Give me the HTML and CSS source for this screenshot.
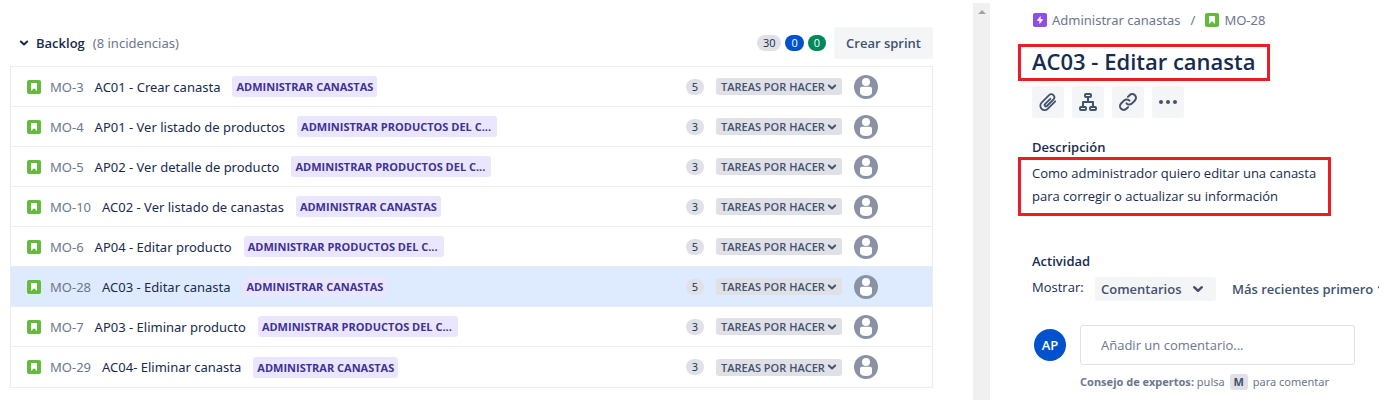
FILE: index.html
```
<!DOCTYPE html>
<html lang="es">
<head>
<meta charset="utf-8">
<title>Backlog</title>
<link rel="stylesheet" href="styles.css">
</head>
<body>
<svg class="sprite" aria-hidden="true">
  <symbol id="story" viewBox="0 0 14 14"><rect width="14" height="14" rx="2" fill="#63ba3c"/><path d="M4 3.600C4 3.200 4.300 3 4.600 3h4.800c.3 0 .6.2.6.6V11L7 8.300 4 11z" fill="#fff"/></symbol>
  <symbol id="epic" viewBox="0 0 14 14"><rect width="14" height="14" rx="2" fill="#904ee2"/><path d="M7.600 2.700v3.500h2.700L6.400 11.300V7.800H3.700z" fill="#fff"/></symbol>
  <symbol id="chevron" viewBox="0 0 10 10"><path d="M1.800 3.500 5 6.500l3.200-3" fill="none" stroke="currentColor" stroke-width="2" stroke-linecap="round" stroke-linejoin="round"/></symbol>
  <symbol id="person" viewBox="0 0 24 24"><circle cx="12" cy="12" r="12" fill="#8993a4"/><circle cx="12" cy="7" r="4" fill="#fff"/><path d="M6 14c0-1.400.8-2.200 2-2.200h8c1.200 0 2 .8 2 2.200v3.500c0 2.300-2.400 3.500-6 3.500s-6-1.200-6-3.500z" fill="#fff"/></symbol>
</svg>
<div class="page">
  <main class="backlog">
    <header class="backlog-head">
      <svg class="icon-10 dark"><use href="#chevron"/></svg>
      <h2 class="backlog-title">Backlog</h2>
      <span class="backlog-count">(8 incidencias)</span>
      <span class="pill push">30</span>
      <span class="pill pill-blue">0</span>
      <span class="pill pill-green">0</span>
      <button class="button sprint">Crear sprint</button>
    </header>
    <ul class="issues">
      <li class="issue"><svg class="icon-14"><use href="#story"/></svg><a class="key" href="#">MO-3</a><span class="summary">AC01 - Crear canasta</span><span class="epic">ADMINISTRAR CANASTAS</span><span class="pill push">5</span><label class="status"><select class="status-select" aria-label="Estado"><option>TAREAS POR HACER</option></select><svg class="icon-10"><use href="#chevron"/></svg></label><svg class="avatar"><use href="#person"/></svg></li>
      <li class="issue"><svg class="icon-14"><use href="#story"/></svg><a class="key" href="#">MO-4</a><span class="summary">AP01 - Ver listado de productos</span><span class="epic epic-long">ADMINISTRAR PRODUCTOS DEL C...</span><span class="pill push">3</span><label class="status"><select class="status-select" aria-label="Estado"><option>TAREAS POR HACER</option></select><svg class="icon-10"><use href="#chevron"/></svg></label><svg class="avatar"><use href="#person"/></svg></li>
      <li class="issue"><svg class="icon-14"><use href="#story"/></svg><a class="key" href="#">MO-5</a><span class="summary">AP02 - Ver detalle de producto</span><span class="epic epic-long">ADMINISTRAR PRODUCTOS DEL C...</span><span class="pill push">3</span><label class="status"><select class="status-select" aria-label="Estado"><option>TAREAS POR HACER</option></select><svg class="icon-10"><use href="#chevron"/></svg></label><svg class="avatar"><use href="#person"/></svg></li>
      <li class="issue"><svg class="icon-14"><use href="#story"/></svg><a class="key" href="#">MO-10</a><span class="summary">AC02 - Ver listado de canastas</span><span class="epic">ADMINISTRAR CANASTAS</span><span class="pill push">3</span><label class="status"><select class="status-select" aria-label="Estado"><option>TAREAS POR HACER</option></select><svg class="icon-10"><use href="#chevron"/></svg></label><svg class="avatar"><use href="#person"/></svg></li>
      <li class="issue"><svg class="icon-14"><use href="#story"/></svg><a class="key" href="#">MO-6</a><span class="summary">AP04 - Editar producto</span><span class="epic epic-long">ADMINISTRAR PRODUCTOS DEL C...</span><span class="pill push">5</span><label class="status"><select class="status-select" aria-label="Estado"><option>TAREAS POR HACER</option></select><svg class="icon-10"><use href="#chevron"/></svg></label><svg class="avatar"><use href="#person"/></svg></li>
      <li class="issue selected"><svg class="icon-14"><use href="#story"/></svg><a class="key" href="#">MO-28</a><span class="summary">AC03 - Editar canasta</span><span class="epic">ADMINISTRAR CANASTAS</span><span class="pill push">5</span><label class="status"><select class="status-select" aria-label="Estado"><option>TAREAS POR HACER</option></select><svg class="icon-10"><use href="#chevron"/></svg></label><svg class="avatar"><use href="#person"/></svg></li>
      <li class="issue"><svg class="icon-14"><use href="#story"/></svg><a class="key" href="#">MO-7</a><span class="summary">AP03 - Eliminar producto</span><span class="epic epic-long">ADMINISTRAR PRODUCTOS DEL C...</span><span class="pill push">3</span><label class="status"><select class="status-select" aria-label="Estado"><option>TAREAS POR HACER</option></select><svg class="icon-10"><use href="#chevron"/></svg></label><svg class="avatar"><use href="#person"/></svg></li>
      <li class="issue"><svg class="icon-14"><use href="#story"/></svg><a class="key" href="#">MO-29</a><span class="summary">AC04- Eliminar canasta</span><span class="epic">ADMINISTRAR CANASTAS</span><span class="pill push">3</span><label class="status"><select class="status-select" aria-label="Estado"><option>TAREAS POR HACER</option></select><svg class="icon-10"><use href="#chevron"/></svg></label><svg class="avatar"><use href="#person"/></svg></li>
    </ul>
  </main>
  <div class="scrollbar"><svg class="scroll-arrow" viewBox="0 0 8 4"><path d="M0 4 4 0l4 4z" fill="#a3a3a3"/></svg></div>
  <aside class="detail">
    <nav class="crumbs">
      <svg class="icon-14"><use href="#epic"/></svg><a class="crumb" href="#">Administrar canastas</a><span class="slash">/</span><svg class="icon-14"><use href="#story"/></svg><a class="crumb" href="#">MO-28</a>
    </nav>
    <h1 class="title marked">AC03 - Editar canasta</h1>
    <div class="tools">
      <button class="button tool" aria-label="Adjuntar"><svg class="icon-20" viewBox="0 0 20 20"><path d="M12.300 6.800 7 12.100a1.300 1.300 0 0 0 1.900 1.900l6.500-6.500a3 3 0 0 0-4.300-4.300L3.600 10.700a4.300 4.300 0 0 0 6.100 6.100l7.500-7.500" fill="none" stroke="currentColor" stroke-width="1.800" stroke-linecap="round" stroke-linejoin="round"/></svg></button>
      <button class="button tool" aria-label="Añadir subtarea"><svg class="icon-20" viewBox="0 0 20 20"><g fill="none" stroke="currentColor" stroke-width="2" stroke-linejoin="round"><rect x="7" y="2" width="6" height="3" rx="1"/><rect x="2" y="15" width="6" height="3" rx="1"/><rect x="12" y="15" width="6" height="3" rx="1"/><path d="M10 5v5M5 15v-5h10v5"/></g></svg></button>
      <button class="button tool" aria-label="Enlazar"><svg class="icon-20" viewBox="0 0 20 20"><g fill="none" stroke="currentColor" stroke-width="2" stroke-linecap="round"><path d="M8.500 11.300a3.700 3.700 0 0 0 5.300.3l3.100-3.100a3.700 3.700 0 0 0-5.300-5.300L9.900 4.900"/><path d="M11.500 8.700a3.700 3.700 0 0 0-5.300-.3l-3.100 3.100a3.700 3.700 0 0 0 5.300 5.300l1.700-1.700"/></g></svg></button>
      <button class="button tool" aria-label="Más acciones"><svg class="icon-20" viewBox="0 0 20 20"><g fill="currentColor"><circle cx="3" cy="10" r="2"/><circle cx="10" cy="10" r="2"/><circle cx="17" cy="10" r="2"/></g></svg></button>
    </div>
    <h2 class="section">Descripción</h2>
    <p class="description marked">Como administrador quiero editar una canasta<br>para corregir o actualizar su información</p>
    <h2 class="section">Actividad</h2>
    <div class="filter">
      <label class="filter-label" for="show">Mostrar:</label>
      <span class="filter-box"><select class="filter-select" id="show"><option>Comentarios</option></select><svg class="icon-12"><use href="#chevron"/></svg></span>
      <button class="order">Más recientes primero<svg class="icon-12"><use href="#chevron"/></svg></button>
    </div>
    <div class="comment">
      <span class="initials">AP</span>
      <div class="comment-body">
        <input class="comment-input" type="text" placeholder="Añadir un comentario..." aria-label="Añadir un comentario">
        <p class="tip"><b>Consejo de expertos:</b> pulsa <kbd class="keycap">M</kbd> para comentar</p>
      </div>
    </div>
  </aside>
</div>
</body>
</html>
```
FILE: styles.css
```
* { box-sizing: border-box; }
body { margin: 0; background: #fff; color: #172b4d; font: 13px/20px "Open Sans", "Noto Sans", sans-serif; overflow: hidden; }
h1, h2, p, ul { margin: 0; padding: 0; font-size: inherit; }
button, input, select { margin: 0; border: 0; font: inherit; color: inherit; }
a { color: inherit; text-decoration: none; }
svg { display: block; flex: none; }
.sprite { position: absolute; width: 0; height: 0; }
.icon-10 { width: 10px; height: 10px; }
.icon-12 { width: 12px; height: 12px; }
.icon-14 { width: 14px; height: 14px; }
.icon-20 { width: 20px; height: 20px; }
.dark { color: #172b4d; }
.page { display: flex; min-height: 100vh; }

.backlog { flex: 1; min-width: 0; padding: 27px 40px 0 10px; }
.backlog-head { display: flex; align-items: center; height: 32px; padding-left: 9px; }
.backlog-title { margin-left: 7px; font-weight: 600; }
.backlog-count { margin-left: 8px; color: #6b778c; font-family: "Noto Sans", sans-serif; }
.pill { flex: none; min-width: 18px; padding: 0 6px; border-radius: 8px; background: #dfe1e6; font-size: 11px; line-height: 16px; text-align: center; }
.pill + .pill { margin-left: 4px; }
.push.push { margin-left: auto; }
.pill-blue { background: #0052cc; color: #fff; }
.pill-green { background: #00875a; color: #fff; }
.button { border-radius: 3px; background: #f4f5f7; color: #42526e; }
.sprint { height: 32px; margin-left: 8px; padding: 0 12px; font-weight: 600; }

.issues { margin-top: 7px; border: 1px solid #ebecf0; list-style: none; }
.issue { display: flex; align-items: center; height: 40px; padding: 0 54px 0 16px; border-bottom: 1px solid #ebecf0; }
.issue:last-child { border-bottom: 0; }
.selected { background: #deebff; }
.key { margin-left: 9px; color: #6b778c; font-family: "Noto Sans", sans-serif; }
.summary { margin-left: 11px; font-family: "Noto Sans", sans-serif; white-space: nowrap; }
.epic { margin-left: 12px; padding: 0 4px; border-radius: 3px; background: #eae6ff; color: #403294; font-size: 11px; font-weight: 700; line-height: 21px; white-space: nowrap; }
.epic-long { min-width: 200px; }
.status { display: grid; align-items: center; flex: none; width: 126px; margin: 0 12px; color: #42526e; }
.status-select { grid-area: 1 / 1; height: 17px; padding: 0 5px; appearance: none; border-radius: 3px; background: #dfe1e6; font-size: 11px; font-weight: 600; line-height: 17px; }
.status .icon-10 { grid-area: 1 / 1; justify-self: end; margin-right: 5px; }
.avatar { width: 24px; height: 24px; }

.scrollbar { flex: none; width: 17px; margin-top: 3px; padding-top: 7px; background: #f0f0f0; }
.scroll-arrow { width: 8px; height: 4px; margin: 0 auto; }

.detail { flex: none; width: 402px; padding: 10px 13px 0 28px; overflow: hidden; }
.crumbs { display: flex; align-items: center; padding-left: 15px; color: #6b778c; font-family: "Noto Sans", sans-serif; }
.crumb { margin-left: 5px; }
.slash { margin: 0 10px; }
.marked { width: fit-content; border: 3px solid #ed1c24; }
.title { margin-top: 14px; padding: 0 11px 2px; font-size: 22px; font-weight: 600; line-height: 29px; }
.tools { display: flex; gap: 8px; margin: 5px 0 19px 14px; }
.tool { display: grid; place-items: center; width: 32px; height: 32px; padding: 0; }
.section { padding-left: 14px; font-weight: 600; }
.description { padding: 2px 12px 5px 11px; line-height: 23px; }
.description + .section { margin-top: 35px; }
.filter { display: flex; align-items: flex-start; margin-top: 6px; padding-left: 14px; overflow: hidden; white-space: nowrap; }
.filter-label { flex: none; width: 63px; }
.filter-box { display: grid; align-items: center; flex: none; width: 121px; color: #42526e; }
.filter-select { grid-area: 1 / 1; height: 24px; padding: 0 6px; appearance: none; border-radius: 3px; background: #f4f5f7; font-weight: 600; }
.filter-box .icon-12 { grid-area: 1 / 1; justify-self: end; margin-right: 12px; }
.order { display: flex; flex: none; align-items: center; gap: 4px; margin-left: 16px; padding: 0; background: none; color: #42526e; font-weight: 600; line-height: 24px; }
.comment { display: flex; gap: 14px; margin-top: 24px; padding: 0 24px 0 16px; }
.initials { flex: none; width: 32px; height: 32px; margin-top: 4px; border-radius: 50%; background: #0052cc; color: #fff; font-weight: 600; line-height: 32px; text-align: center; }
.comment-body { flex: 1; min-width: 0; }
.comment-input { width: 100%; height: 40px; padding: 0 20px; border: 1px solid #dfe1e6; border-radius: 3px; background: #fff; }
.comment-input::placeholder { color: #6b778c; }
.tip { margin-top: 7px; color: #6b778c; font-family: "Noto Sans", sans-serif; font-size: 11px; white-space: nowrap; }
.keycap { display: inline-block; margin: 0 2px; padding: 0 4px; border-radius: 3px; background: #dfe1e6; color: #42526e; font: 700 11px/16px "Open Sans", sans-serif; }
```
